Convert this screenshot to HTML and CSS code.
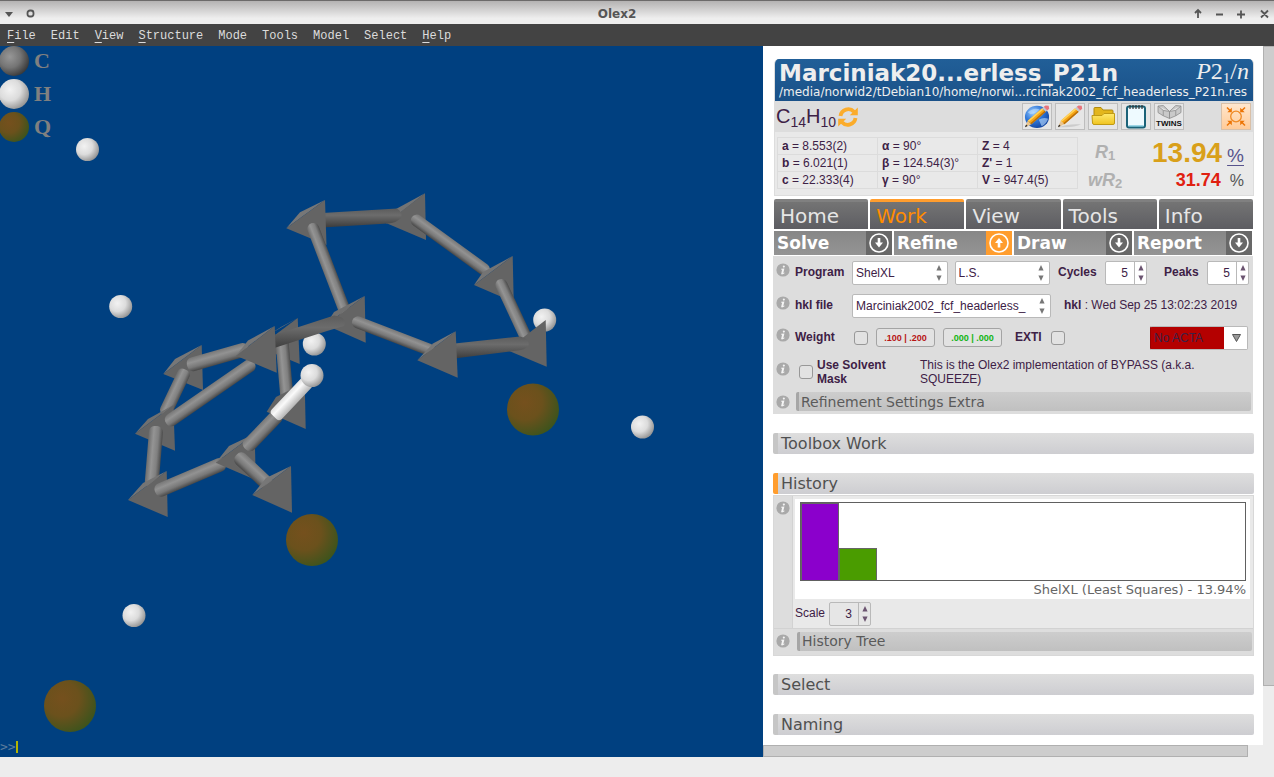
FILE: index.html
```html
<!DOCTYPE html>
<html lang="en">
<head>
<meta charset="utf-8">
<title>Olex2</title>
<link rel="stylesheet" href="styles.css">
</head>
<body>
<svg class="defs" width="0" height="0" aria-hidden="true">
  <defs>
    <linearGradient id="bond" x1="0" y1="0" x2="0" y2="1"><stop offset="0" stop-color="#777"/><stop offset=".35" stop-color="#929292"/><stop offset=".7" stop-color="#787878"/><stop offset="1" stop-color="#484848"/></linearGradient>
    <linearGradient id="bondr" x1="0" y1="1" x2="0" y2="0"><stop offset="0" stop-color="#6c6c6c"/><stop offset=".35" stop-color="#949494"/><stop offset=".7" stop-color="#808080"/><stop offset="1" stop-color="#4c4c4c"/></linearGradient>
    <linearGradient id="dark" x1="0" y1="0" x2="0" y2="1"><stop offset="0" stop-color="#5c5c5c"/><stop offset=".35" stop-color="#6c6c6c"/><stop offset="1" stop-color="#3a3a3a"/></linearGradient>
    <linearGradient id="whiteb" x1="0" y1="0" x2="0" y2="1"><stop offset="0" stop-color="#e0e0e0"/><stop offset=".35" stop-color="#fafafa"/><stop offset="1" stop-color="#b4b4b4"/></linearGradient>
    <radialGradient id="hyd" cx=".36" cy=".36" r=".72"><stop offset="0" stop-color="#f2f2f2"/><stop offset=".5" stop-color="#dcdcdc"/><stop offset="1" stop-color="#8c8c8c"/></radialGradient>
    <radialGradient id="carb" cx=".36" cy=".36" r=".72"><stop offset="0" stop-color="#979797"/><stop offset=".5" stop-color="#757575"/><stop offset="1" stop-color="#333"/></radialGradient>
    <radialGradient id="peak" cx=".34" cy=".36" r=".75"><stop offset="0" stop-color="#75501d"/><stop offset=".45" stop-color="#6b511c"/><stop offset="1" stop-color="#37541c"/></radialGradient>
    <linearGradient id="folder" x1="0" y1="0" x2="0" y2="1"><stop offset="0" stop-color="#ffea70"/><stop offset="1" stop-color="#efc31f"/></linearGradient>
    <radialGradient id="globe" cx=".35" cy=".3" r=".8"><stop offset="0" stop-color="#9fd0ff"/><stop offset=".5" stop-color="#2d74d6"/><stop offset="1" stop-color="#0d3c96"/></radialGradient>
    <symbol id="info" viewBox="0 0 14 14"><circle cx="7" cy="7" r="6.6" fill="#a9a9a9"/><path d="M7.8 2.4a1 1 0 1 0 .1 0ZM5.2 5.7 8.4 5.4 7.3 9.9 8.6 9.5 8.3 10.5 6 11.5 5.1 11.1 6.1 6.7 5 6.6Z" fill="#f4f4f4"/></symbol>
    <symbol id="spin" viewBox="0 0 8 16"><path d="M4 0 6.600 5.500H1.400ZM1.400 10.500h5.200L4 16Z" fill="currentColor"/></symbol>
    <symbol id="down" viewBox="0 0 26 24"><circle cx="13" cy="12" r="9" fill="none" stroke="#fff" stroke-width="1.6"/><path d="M11.7 7h2.6v4.6h2.7L13 16.6 9 11.6h2.7Z" fill="#fff"/></symbol>
    <symbol id="up" viewBox="0 0 26 24"><circle cx="13" cy="12" r="9" fill="none" stroke="#fff" stroke-width="1.6"/><path d="M11.7 16.6h2.6V12h2.7L13 7 9 12h2.7Z" fill="#fff"/></symbol>
    <symbol id="pencil" viewBox="0 0 30 27"><path d="M2 25 5 18 9 22Z" fill="#e9c48e"/><path d="M2 25 3.2 22.2 4.9 23.8Z" fill="#222"/><path d="M5 18 20.500 4.500 24.500 8.500 9 22Z" fill="#f6a414"/><path d="M5 18 20.500 4.500 21.900 5.900 6.300 19.300Z" fill="#ffd35a"/><path d="M7.800 20.800 23.300 7.300 24.500 8.500 9 22Z" fill="#b96f0a"/><path d="M20.500 4.500 22.300 3 26 6.900 24.500 8.500Z" fill="#c4c8cc"/><path d="M22.300 3 24.200 1.600 27.600 1.800 28.200 5 26 6.900Z" fill="#e8747c"/></symbol>
  </defs>
</svg>

<header class="titlebar">
  <svg class="title-icons" width="36" height="12" viewBox="0 0 36 12"><path d="M1 4h8L5 9Z" fill="#555"/><rect x="23.500" y="2.500" width="6" height="6" rx="2.500" fill="none" stroke="#555" stroke-width="1.800"/></svg>
  <h1 class="window-title">Olex2</h1>
  <svg class="title-icons" width="76" height="12" viewBox="0 0 76 12"><path d="M4 10V2M1 5 4 2 7 5M22 6.500h7M43 6.500h8M47 2.500v8M67 2.500l7 7M74 2.500l-7 7" fill="none" stroke="#555" stroke-width="1.800"/></svg>
</header>

<nav class="menubar">
  <button class="menu"><u>F</u>ile</button><button class="menu">Edit</button><button class="menu"><u>V</u>iew</button><button class="menu"><u>S</u>tructure</button><button class="menu">Mode</button><button class="menu">Tools</button><button class="menu">Model</button><button class="menu">Select</button><button class="menu"><u>H</u>elp</button>
</nav>

<main class="workspace">
  <section class="viewer" aria-label="Structure view">
    <svg class="molecule" viewBox="0 46 763 711" preserveAspectRatio="xMinYMin meet">
      <g fill="url(#hyd)">
        <circle cx="87.500" cy="149.500" r="11.500"/><circle cx="120.700" cy="306.500" r="11.500"/><circle cx="544.700" cy="320" r="11.500"/><circle cx="314.300" cy="344" r="11.500"/><circle cx="642.500" cy="427" r="11.500"/><circle cx="134" cy="615.500" r="11.500"/>
      </g>
      <g fill="url(#peak)">
        <circle cx="533" cy="409.500" r="26"/><circle cx="312" cy="540" r="26"/><circle cx="70" cy="706" r="26"/>
      </g>
      <!-- atoms and bonds, farthest first -->
      <g fill="#646464">
        <path d="M386 224 396 209 425 193.300Z" fill="#747474"/><path d="M386 223 425 193.300 426 240Z"/>
        <rect x="-5" y="-6" width="95" height="12" rx="6" fill="url(#bond)" transform="translate(416 220) rotate(36)"/>
        <path d="M318 213.200 397 208.500Q403 212 401 218 396 223 388 223.500L318 227.800Z" fill="url(#dark)"/>
        <path d="M286.300 228.300 300 212.300 325 200Z" fill="#777"/><path d="M286.300 228.300 325 200 326.500 245Z"/>
        <rect x="-5" y="-6" width="103" height="12" rx="6" fill="url(#bondr)" transform="translate(313 228) rotate(69)"/>
        <path d="M474 285 483 272 512.700 256Z" fill="#747474"/><path d="M474 285 512.700 256 513.700 302Z"/>
        <rect x="-5" y="-6" width="68" height="12" rx="6" fill="url(#bondr)" transform="translate(501 284) rotate(65)"/>
        <path d="M507 350 545.700 320 546.700 366.700Z"/>
        <path d="M450 344 520 336.500Q530 339 528.500 346 524 350 518 350.500L450 359Z" fill="url(#dark)"/>
        <path d="M325.700 325 334 312 364.700 296Z" fill="#707070"/><path d="M325.700 325 364.700 296 365.700 342.700Z"/>
        <rect x="-5" y="-6" width="88" height="12" rx="6" fill="url(#bond)" transform="translate(357 322) rotate(21)"/>
        <path d="M417.300 360.300 433 343.500 455.700 331.300Z" fill="#777"/><path d="M417.300 360.300 455.700 331.300 457.700 377.700Z"/>

        <path d="M259 347 297.700 318 299.700 364Z"/><path d="M270 334 281 327 297.700 318Z" fill="#747474"/>
        <rect x="-5" y="-6" width="58" height="13" fill="url(#bondr)" transform="translate(283 347) rotate(85)"/>
        <path d="M266.700 411.700 276 397 304.700 382.500 305.700 429Z"/>
        <path d="M163.300 374 175 359 201.700 345Z" fill="#777"/><path d="M163.300 374 201.700 345 203 390Z"/>
        <rect x="-5" y="-7" width="50" height="13" rx="5" fill="url(#bondr)" transform="translate(183 374) rotate(115.300)"/>
        <rect x="-3" y="-7" width="64" height="14" rx="6" fill="url(#bond)" transform="translate(190 365) rotate(-15.800)"/>
        <path d="M135 433.700 148 419 173.300 405Z" fill="#707070"/><path d="M135 433.700 173.300 405 175 450.700Z"/>
        <rect x="-5" y="-7" width="62" height="14" rx="6" fill="url(#bondr)" transform="translate(156 431) rotate(94.700)"/>
        <rect x="-5" y="-6" width="107" height="13" rx="6" fill="url(#bond)" transform="translate(170 420) rotate(-34.600)"/>
        <path d="M268 337 334 315.500Q348 317 344 326L327 331 268 350Z" fill="url(#dark)"/>
        <path d="M236 355.700 248 340.500 274.700 326Z" fill="#777"/><path d="M236 355.700 274.700 326 276.700 372.700Z"/>
        <path d="M128 500 143 483 166.700 471Z" fill="#747474"/><path d="M128 500 166.700 471 167.700 517Z"/>
        <rect x="-3" y="-7" width="76" height="14" rx="6" fill="url(#bond)" transform="translate(158 491) rotate(-23)"/>
        <path d="M215.700 462.700 229 446 254.700 433.700Z" fill="#747474"/><path d="M215.700 462.700 254.700 433.700 255.700 480Z"/>
        <rect x="-4" y="-6" width="46" height="14" rx="6" fill="url(#bond)" transform="translate(240 457) rotate(43)"/>
        <rect x="-4" y="-7" width="50" height="14" rx="6" fill="url(#bond)" transform="translate(248 446) rotate(-46)"/>
        <rect x="-4" y="-7" width="50" height="14" rx="4" fill="url(#whiteb)" transform="translate(277 414) rotate(-46.600)"/>
        <circle cx="312" cy="375.500" r="11.500" fill="url(#hyd)"/>
        <path d="M252.300 495 266 478 291 466Z" fill="#777"/><path d="M252.300 495 291 466 292 512.700Z"/>
      </g>
    </svg>
    <ul class="legend">
      <li><svg width="29" height="30" viewBox="0 0 29 30"><circle cx="14" cy="15" r="15" fill="url(#carb)"/></svg>C</li>
      <li><svg width="29" height="30" viewBox="0 0 29 30"><circle cx="14" cy="15" r="15" fill="url(#hyd)"/></svg>H</li>
      <li><svg width="29" height="30" viewBox="0 0 29 30"><circle cx="14" cy="15" r="15" fill="url(#peak)"/></svg>Q</li>
    </ul>
    <div class="prompt">&gt;&gt;<span class="caret"></span></div>
  </section>

  <div class="side">
    <div class="panel">
      <section class="card">
        <header class="file-head">
          <div class="file-line"><h2 class="file-name">Marciniak20...erless_P21n</h2><span class="group"><i>P</i>2<sub>1</sub>/<i>n</i></span></div>
          <div class="file-path">/media/norwid2/tDebian10/home/norwi...rciniak2002_fcf_headerless_P21n.res</div>
        </header>
        <div class="formula-row">
          <span class="formula">C<sub>14</sub>H<sub>10</sub></span>
          <button class="plain" aria-label="Refresh formula"><svg width="22" height="22" viewBox="0 0 22 22"><path d="M3.500 10A7.800 7.800 0 0 1 17 5.800M18.500 12A7.800 7.800 0 0 1 5 16.200" fill="none" stroke="#fbac2b" stroke-width="3.800"/><path d="M20.800 1.500V9.200H12.800ZM1.200 20.500V12.800H9.200Z" fill="#fbac2b"/></svg></button>
          <div class="tools">
            <button class="tool" aria-label="Web report"><svg width="28" height="25" viewBox="0 0 30 27"><ellipse cx="15" cy="14" rx="13" ry="12" fill="url(#globe)"/><path d="M5 9Q12 3 18 6 13 11 8 11ZM17 17q5-3 10-1-2 6-7 8Z" fill="#bfe0ff" opacity=".6"/><use href="#pencil"/></svg></button>
            <button class="tool" aria-label="Edit"><svg width="28" height="25" viewBox="0 0 30 27"><path d="M3 25q10-4 24-3-8 4-24 3Z" fill="#ccc"/><use href="#pencil"/></svg></button>
            <button class="tool" aria-label="Open folder"><svg width="28" height="25" viewBox="0 0 28 25"><path d="M5 14V4.500Q5 3.500 6 3.500H12L14 6H23Q24 6 24 7V16Z" fill="#e3b61c" stroke="#b08a10"/><path d="M3 11.500H13L15 9.500H25.500V19Q25.500 20.500 24 20.500H5Q3.700 20.500 3.500 19Z" fill="url(#folder)" stroke="#c09a14"/></svg></button>
            <button class="tool" aria-label="Notes"><svg width="28" height="25" viewBox="0 0 28 25"><rect x="5" y="2.500" width="18" height="21" rx="2" fill="#eefaff" stroke="#1b6278" stroke-width="2"/><path d="M6.500 22h15" stroke="#4fb2cc"/><path d="M8 1v4M11 1v4M14 1v4M17 1v4M20 1v4" stroke="#333" stroke-width="1.200"/></svg></button>
            <button class="tool twins" aria-label="Twins"><svg width="25" height="14" viewBox="0 0 24 13" preserveAspectRatio="none"><path d="M1 1 6 .5 12 6V12.500L6 10 1 7ZM1 1 6 5 12 6M6 5V10M23 1 18 .5 12 6V12.500L18 10 23 7ZM23 1 18 5 12 6M18 5V10" fill="#c9c9c9" stroke="#8f8f8f" stroke-width=".8"/></svg><span>TWINS</span></button>
            <button class="tool center" aria-label="Center view"><svg width="28" height="25" viewBox="0 0 28 25"><circle cx="14" cy="12.500" r="5.300" fill="none" stroke="#f08a24" stroke-width="1.300"/><path d="M5 3.500 9 7.500M23 3.500 19 7.500M5 21.500 9 17.500M23 21.500 19 17.500" stroke="#ec7404" stroke-width="1.500"/><path d="M9.800 3.800V8.300H5.300ZM18.200 3.800V8.300H22.700ZM9.800 21.200V16.700H5.300ZM18.200 21.200V16.700H22.700Z" fill="#ec7404"/></svg></button>
          </div>
        </div>
        <div class="cell-row">
          <table class="cell">
            <tr><td><b>a</b> = 8.553(2)</td><td><b>α</b> = 90°</td><td><b>Z</b> = 4</td></tr>
            <tr><td><b>b</b> = 6.021(1)</td><td><b>β</b> = 124.54(3)°</td><td><b>Z'</b> = 1</td></tr>
            <tr><td><b>c</b> = 22.333(4)</td><td><b>γ</b> = 90°</td><td><b>V</b> = 947.4(5)</td></tr>
          </table>
          <div class="rlabels"><div>R<sub>1</sub></div><div>wR<sub>2</sub></div></div>
          <div class="rvalues">
            <div class="r1"><strong>13.94</strong><a href="#r1">%</a></div>
            <div class="wr2"><strong>31.74</strong><span>%</span></div>
          </div>
        </div>
      </section>

      <nav class="tabs">
        <button class="tab">Home</button><button class="tab active">Work</button><button class="tab">View</button><button class="tab">Tools</button><button class="tab">Info</button>
      </nav>
      <nav class="subtabs">
        <button class="subtab">Solve<svg width="26" height="24"><use href="#down"/></svg></button>
        <button class="subtab active">Refine<svg width="26" height="24"><use href="#up"/></svg></button>
        <button class="subtab">Draw<svg width="26" height="24"><use href="#down"/></svg></button>
        <button class="subtab">Report<svg width="26" height="24"><use href="#down"/></svg></button>
      </nav>

      <form class="refine">
        <div class="row program">
          <svg class="info"><use href="#info"/></svg>
          <label class="name" for="program">Program</label>
          <span class="field grow"><select id="program"><option>ShelXL</option></select><svg class="arrows"><use href="#spin"/></svg></span>
          <span class="field grow"><select aria-label="Method"><option>L.S.</option></select><svg class="arrows"><use href="#spin"/></svg></span>
          <label class="name cycles" for="cycles">Cycles</label>
          <span class="field number"><input id="cycles" type="number" value="5"><svg class="arrows"><use href="#spin"/></svg></span>
          <label class="name peaks" for="peaks">Peaks</label>
          <span class="field number"><input id="peaks" type="number" value="5"><svg class="arrows"><use href="#spin"/></svg></span>
        </div>
        <div class="row">
          <svg class="info"><use href="#info"/></svg>
          <label class="name" for="hkl">hkl file</label>
          <span class="field hkl"><select id="hkl"><option>Marciniak2002_fcf_headerless_</option></select><svg class="arrows"><use href="#spin"/></svg></span>
          <span class="stamp"><b>hkl</b> : Wed Sep 25 13:02:23 2019</span>
        </div>
        <div class="row weight">
          <svg class="info"><use href="#info"/></svg>
          <label class="name" for="weight">Weight</label>
          <input class="tick" id="weight" type="checkbox">
          <button class="pair red" type="button">.100 | .200</button>
          <button class="pair green" type="button">.000 | .000</button>
          <label class="exti" for="exti">EXTI</label>
          <input class="tick" id="exti" type="checkbox">
          <span class="field acta"><select aria-label="ACTA"><option>No ACTA</option></select><svg class="drop" viewBox="0 0 9 8"><path d="M.5.500h8L4.500 7.500Z" fill="#999" stroke="#555"/></svg></span>
        </div>
        <div class="row mask">
          <svg class="info"><use href="#info"/></svg>
          <input class="tick" id="mask" type="checkbox">
          <label class="mask-label" for="mask">Use Solvent Mask</label>
          <span class="note">This is the Olex2 implementation of BYPASS (a.k.a. SQUEEZE)</span>
        </div>
        <div class="row last">
          <svg class="info"><use href="#info"/></svg>
          <button class="subbar" type="button">Refinement Settings Extra</button>
        </div>
      </form>

      <button class="bar">Toolbox Work</button>
      <button class="bar open">History</button>
      <section class="history">
        <div class="hist-main">
          <div class="gutter"><svg class="info"><use href="#info"/></svg></div>
          <div class="hist-body">
            <figure class="plot">
              <div class="chart"><div class="col violet" style="height:100%"></div><div class="col green" style="height:42%"></div></div>
              <figcaption>ShelXL (Least Squares) - 13.94%</figcaption>
            </figure>
            <div class="scale"><label for="scale">Scale</label><span class="field number"><input id="scale" type="number" value="3"><svg class="arrows"><use href="#spin"/></svg></span></div>
          </div>
        </div>
        <div class="hist-tree">
          <svg class="info"><use href="#info"/></svg>
          <button class="subbar">History Tree</button>
        </div>
      </section>
      <button class="bar">Select</button>
      <button class="bar">Naming</button>
    </div>
    <div class="vtrack"><div class="vthumb"></div></div>
    <div class="htrack"><div class="hthumb"></div></div>
  </div>
</main>
<footer class="status"></footer>
</body>
</html>
```
FILE: styles.css
```css
* { box-sizing: border-box; }
body {
  margin: 0;
  height: 100vh;
  display: flex;
  flex-direction: column;
  overflow: hidden;
  background: #ededed;
  color: #3d2146;
  font: 12px/17px "Liberation Sans", Arial, sans-serif;
}
button, input, select { font: inherit; color: inherit; margin: 0; }
button { border: 0; padding: 0; background: none; text-align: left; }
sub { vertical-align: baseline; position: relative; top: 4px; line-height: 0; }
.defs { position: absolute; }

.titlebar {
  flex: none;
  height: 24px;
  display: flex;
  justify-content: space-between;
  align-items: center;
  padding: 2px 4px 0;
  border-top: 1px solid #6c6a6a;
  background: linear-gradient(#b4b2b2, #eee 75%);
}
.window-title { margin: 0; font: bold 12px/20px "DejaVu Sans", sans-serif; color: #555; }

.menubar {
  flex: none;
  height: 22px;
  display: flex;
  gap: 15px;
  padding: 1px 7px 0;
  background: #434343;
}
.menu { font: 12px/22px "Liberation Mono", monospace; color: #dcdcdc; }
.menu u { text-underline-offset: 3px; }

.workspace {
  flex: 1;
  min-height: 0;
  display: grid;
  grid-template-columns: 763fr 511fr;
}
.status { flex: none; height: 20px; }

.viewer {
  position: relative;
  display: flex;
  flex-direction: column;
  justify-content: space-between;
  background: #004080;
  overflow: hidden;
}
.molecule { position: absolute; top: 0; left: 0; width: 100%; height: 100%; }
.legend { list-style: none; margin: 0; padding: 0; font: bold 22px/30px "Liberation Serif", serif; color: #808080; }
.legend li { display: flex; gap: 5px; margin-bottom: 3px; }
.prompt { display: flex; align-items: center; height: 20px; font: 13px/20px "DejaVu Sans Mono", monospace; color: #5c7c9c; }
.caret { width: 2px; height: 12px; background: #b5b500; }

.side {
  display: grid;
  grid-template: 1fr 12px / 1fr 11px;
  min-width: 0;
  min-height: 0;
}
.panel { background: #fff; padding: 13px 9px 0 10px; overflow: hidden; }
.vthumb { height: 91.500%; background: #cdcdcd; border: 1px solid #b0b0b0; border-right: 0; }
.hthumb { height: 12px; width: 97%; background: #cdcdcd; border: 1px solid #b0b0b0; }

.card { margin-left: 1px; border: 1px solid #ddd; border-top: 0; border-width: 0 1px 1px; border-radius: 5px 5px 0 0; overflow: hidden; background: #e9e9e9; }
.file-head { height: 42px; padding: 0 4px; background: linear-gradient(#215f98, #1a5188); color: #eee; }
.file-line { display: flex; justify-content: space-between; height: 25px; white-space: nowrap; }
.file-name { margin: 0; font: bold 23px/29px "DejaVu Sans", sans-serif; }
.group { font: 24px/25px "Liberation Serif", serif; }
.group sub { font-size: 15px; }
.file-path { font: 12px/16px "DejaVu Sans", sans-serif; white-space: nowrap; }

.formula-row { display: flex; align-items: center; height: 31px; padding-left: 1px; background: #ddd; }
.formula { font-size: 20px; line-height: 28px; padding-bottom: 2px; }
.formula sub { font-size: 14px; }
.plain { display: flex; margin-left: 1px; }
.tools { flex: 1; display: flex; justify-content: flex-end; gap: 3px; padding-right: 2px; }
.tool {
  width: 30px;
  height: 27px;
  display: flex;
  align-items: center;
  justify-content: center;
  border: 1px solid #bdbdbd;
  background: #e6e6e6;
}
.twins { flex-direction: column; font: bold 8px/9px "Liberation Sans", sans-serif; color: #111; }
.center { margin-left: 34px; background: linear-gradient(#ffe6cd, #ffcb98); border-color: #d9c0a8; }

.cell-row { display: flex; height: 63px; padding: 5px 2px; }
.cell { flex: none; width: 301px; height: 52px; border-collapse: collapse; table-layout: fixed; }
.cell td { height: 17px; padding: 0 0 0 4px; border: 1px solid #dcdcdc; line-height: 15px; }
.rlabels { width: 54px; text-align: center; font: italic bold 18px/30px "Liberation Sans", sans-serif; color: #b0b0b0; }
.rlabels div + div { line-height: 26px; }
.rlabels sub { top: 2px; font-size: 13px; font-style: normal; }
.rvalues { flex: 1; padding-right: 7px; }
.r1, .wr2 { display: flex; justify-content: flex-end; align-items: baseline; }
.r1 { gap: 5px; height: 31px; font-size: 28px; line-height: 31px; color: #d9a01a; }
.r1 a { font-size: 19px; line-height: 20px; color: #57538c; text-underline-offset: 3px; }
.wr2 { gap: 9px; font-size: 18px; line-height: 24px; color: #e02010; }
.wr2 span { font-size: 16px; color: #555; }

.tabs { display: grid; grid-template-columns: repeat(5, 1fr); gap: 2px; margin: 3px 1px 2px; }
.tab {
  height: 30px;
  padding-left: 6px;
  border-top: 3px solid #808080;
  border-radius: 2px 2px 0 0;
  background: linear-gradient(#747474, #5d5d62);
  color: #e6e6e6;
  font: 20px/28px "DejaVu Sans", sans-serif;
}
.tab.active { border-color: #ff9d2e; color: #ff8c00; }
.subtabs { display: grid; grid-template-columns: repeat(4, 1fr); gap: 2px; margin: 0 2px 0 1px; }
.subtab {
  display: flex;
  justify-content: space-between;
  padding-left: 3px;
  background: linear-gradient(#878787, #949494);
  color: #fff;
  font: bold 17px/24px "DejaVu Sans", sans-serif;
}
.subtab svg { background: #686868; }
.subtab.active svg { background: #ff9d2e; }

.refine { margin: 1px 1px 19px 0; padding-right: 2px; background: #ddd; }
.row { display: flex; align-items: center; height: 33px; }
.info { flex: none; width: 14px; height: 14px; margin: 0 5px 0 3px; }
.row .info { position: relative; top: -3px; }
.name { width: 57px; font-weight: bold; }
.cycles { width: 55px; padding-left: 8px; }
.peaks { width: 60px; padding-left: 17px; }
.program { padding-right: 2px; }
.field { position: relative; display: flex; height: 24px; }
.grow { flex: 1; }
.grow + .grow { margin-left: 7px; }
.field select, .field input {
  width: 100%;
  min-width: 0;
  height: 24px;
  padding: 0 18px 0 4px;
  border: 1px solid #b9b9b9;
  border-radius: 2px;
  background: #fff;
  appearance: none;
}
.field select { padding-top: 1px; padding-left: 3px; }
.arrows { position: absolute; right: 5px; top: 4px; width: 8px; height: 16px; color: #777; pointer-events: none; }
.field.number { flex: none; width: 42px; }
.number input { text-align: right; appearance: textfield; }
.number input::-webkit-inner-spin-button { appearance: none; margin: 0; }
.number::after { content: ""; position: absolute; right: 12px; top: 1px; bottom: 1px; border-left: 1px solid #b9b9b9; }
.number .arrows { right: 2px; color: #6b5470; }
.hkl { flex: none; width: 199px; }
.stamp { margin-left: 13px; white-space: nowrap; }
.weight { height: 31px; padding-right: 3px; }
.tick { flex: none; width: 14px; height: 14px; appearance: none; border: 1px solid #989898; border-radius: 3px; background: #e2e2e2; }
.weight .tick { margin-left: 2px; }
.pair {
  width: 59px;
  height: 19px;
  margin-left: 8px;
  border: 1px solid #a4a4a4;
  border-radius: 3px;
  background: #e2e2e2;
  text-align: center;
  font-weight: bold;
  font-size: 9px;
  line-height: 16px;
}
.red { color: #b81414; }
.pair.green { color: #12b412; }
.exti { margin: 0 7px 0 13px; font-weight: bold; }
.acta { width: 98px; margin-left: auto; }
.acta select { border-color: #b9b9b9 #b9b9b9 #b9b9b9 #900; background: linear-gradient(90deg, #b40000 74px, #fff 74px) border-box; }
.drop { position: absolute; right: 7px; top: 8px; width: 9px; height: 8px; pointer-events: none; }
.mask { height: 38px; line-height: 14px; }
.mask .tick { margin-left: 4px; }
.mask-label { width: 76px; margin: 0 27px 0 4px; font-weight: bold; }
.note { flex: 1; }
.last { height: 23px; align-items: flex-start; padding-top: 1px; }
.last .info { top: 3px; }
.subbar {
  flex: 1;
  height: 19px;
  margin-left: 1px;
  padding-left: 2px;
  border-left: 3px solid #a6a6a6;
  border-radius: 2px;
  background: linear-gradient(#cdcdcd, #c0c0c0);
  color: #5a5a5a;
  font: 14px/18px "DejaVu Sans", sans-serif;
}

.bar {
  display: block;
  width: 100%;
  height: 21px;
  margin-bottom: 19px;
  padding-left: 3px;
  border-left: 5px solid #c6c6c6;
  border-radius: 2px;
  background: linear-gradient(#dedede, #cdcdd1);
  color: #505050;
  font: 16px/21px "DejaVu Sans", sans-serif;
}
.bar.open { margin-bottom: 1px; border-color: #ff9d2e; }

.history { margin-bottom: 18px; border: 1px solid #d8d8d8; background: #e9e9e9; }
.hist-main { display: flex; }
.gutter { flex: none; width: 19px; padding-top: 5px; background: #ddd; border-right: 1px solid #d2d2d2; }
.gutter .info { margin: 0 2px; }
.hist-body { flex: 1; padding: 3px 3px 0 2px; }
.plot { margin: 0; height: 100px; padding: 3px 4px 0 5px; background: #fff; color: #666; text-align: right; font: 13px/18px "DejaVu Sans", sans-serif; }
.chart { display: flex; align-items: flex-end; height: 79px; border: 1px solid #606060; }
.col { width: 38px; border: 1px solid #666; border-bottom: 0; }
.violet { background: #8b00cc; }
.col.green { background: #4a9c00; }
.scale { display: flex; align-items: center; height: 29px; gap: 4px; }
.scale input { background: #e6e6e6; }
.hist-tree { display: flex; align-items: center; height: 27px; padding: 0 1px 2px 0; border-top: 1px solid #d2d2d2; background: #ddd; }
.hist-tree .info { margin-left: 2px; }
.hist-tree .subbar { margin-left: 2px; }
```
